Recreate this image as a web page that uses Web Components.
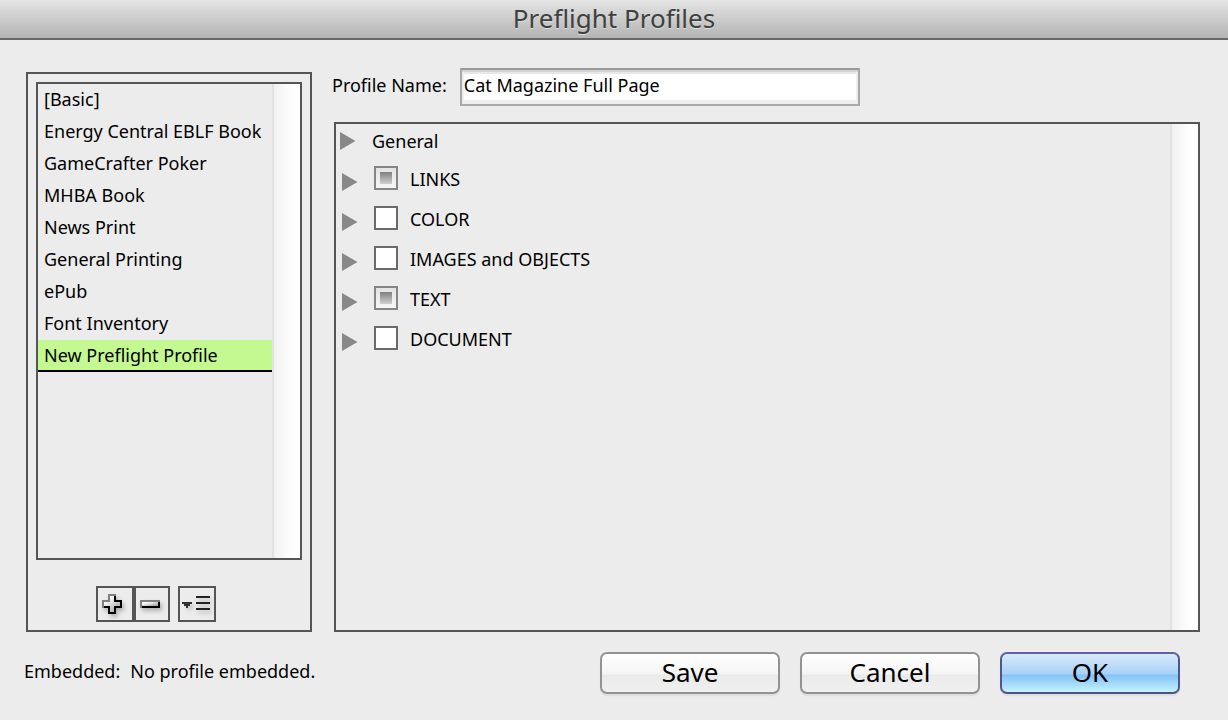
<!DOCTYPE html>
<html lang="en">
<head>
<meta charset="utf-8">
<meta name="viewport" content="width=device-width, initial-scale=1">
<title>Preflight Profiles</title>
<style>
  html, body { margin: 0; min-height: 100%; }
  body {
    --line: #555;
    --face: #ececec;
    background: var(--face);
    color: #000;
    font: 18px/24px "Noto Sans", sans-serif;
  }
</style>
</head>
<body>
<preflight-window heading="Preflight Profiles">
  <profile-list slot="sidebar">
    <profile-item>[Basic]</profile-item>
    <profile-item>Energy Central EBLF Book</profile-item>
    <profile-item>GameCrafter Poker</profile-item>
    <profile-item>MHBA Book</profile-item>
    <profile-item>News Print</profile-item>
    <profile-item>General Printing</profile-item>
    <profile-item>ePub</profile-item>
    <profile-item>Font Inventory</profile-item>
    <profile-item selected>New Preflight Profile</profile-item>
  </profile-list>
  <name-field label="Profile Name:" value="Cat Magazine Full Page"></name-field>
  <rule-panel>
    <rule-row plain>General</rule-row>
    <rule-row state="mixed">LINKS</rule-row>
    <rule-row>COLOR</rule-row>
    <rule-row>IMAGES and OBJECTS</rule-row>
    <rule-row state="mixed">TEXT</rule-row>
    <rule-row>DOCUMENT</rule-row>
  </rule-panel>
  <embed-status slot="status" label="Embedded:">No profile embedded.</embed-status>
  <push-button slot="actions">Save</push-button>
  <push-button slot="actions">Cancel</push-button>
  <push-button slot="actions" primary>OK</push-button>
</preflight-window>

<script>
class BaseElement extends HTMLElement {
  constructor() {
    super();
    this.attachShadow({ mode: 'open' }).innerHTML = this.view();
  }
  attr(name) { return this.getAttribute(name) || ''; }
}

customElements.define('preflight-window', class extends BaseElement {
  view() {
    return `
    <style>
      :host { display: flex; flex-direction: column; min-height: 100vh; }
      header {
        box-sizing: border-box; height: 40px; border-bottom: 2px solid #686868;
        background: linear-gradient(#e4e4e4, #b4b4b4);
        text-align: center;
      }
      h1 { margin: 0; font-size: 26px; line-height: 36px; font-weight: 400; color: #404040; text-shadow: 0 1px 0 #ddd; }
      main { flex: 1; display: flex; gap: 22px; padding: 28px 28px 0 26px; }
      .sidebar { display: flex; flex: none; padding-top: 4px; }
      .content { flex: 1; min-width: 0; display: flex; flex-direction: column; gap: 16px; }
      footer { display: flex; align-items: center; justify-content: space-between; padding: 20px 48px 26px 24px; }
      .actions { display: flex; gap: 20px; }
    </style>
    <header><h1>${this.attr('heading')}</h1></header>
    <main>
      <div class="sidebar"><slot name="sidebar"></slot></div>
      <div class="content"><slot></slot></div>
    </main>
    <footer>
      <slot name="status"></slot>
      <div class="actions"><slot name="actions"></slot></div>
    </footer>`;
  }
});

customElements.define('profile-list', class extends BaseElement {
  view() {
    return `
    <style>
      :host { display: flex; flex-direction: column; gap: 26px; box-sizing: border-box; width: 286px; padding: 8px; border: 2px solid var(--line); }
      .box { flex: 1; display: flex; border: 2px solid var(--line); }
      .items { flex: 1; min-width: 0; }
      scroll-track { flex: none; }
      .tools { display: flex; justify-content: center; padding-right: 26px; }
      tool-button + tool-button:last-child { margin-left: 8px; }
    </style>
    <div class="box">
      <div class="items" role="listbox" aria-label="Profiles"><slot></slot></div>
      <scroll-track></scroll-track>
    </div>
    <div class="tools">
      <tool-button kind="add"></tool-button>
      <tool-button kind="remove"></tool-button>
      <tool-button kind="menu"></tool-button>
    </div>`;
  }
});

customElements.define('profile-item', class extends BaseElement {
  view() {
    return `
    <style>
      :host { display: block; box-sizing: border-box; height: 32px; padding-left: 6px; line-height: 30px; white-space: nowrap; border-bottom: 2px solid transparent; }
      :host([selected]) { background: #c3f990; border-bottom-color: #000; }
    </style><slot></slot>`;
  }
  connectedCallback() {
    this.setAttribute('role', 'option');
    this.setAttribute('aria-selected', this.hasAttribute('selected'));
  }
});

customElements.define('scroll-track', class extends BaseElement {
  view() {
    return `
    <style>
      :host { display: block; box-sizing: border-box; width: 28px; border-left: 2px solid #e2e2e2; background: linear-gradient(90deg, #f1f1f1, #fdfdfd 60%, #fff); }
    </style>`;
  }
});

customElements.define('tool-button', class extends BaseElement {
  view() {
    const art = {
      add: ['Add profile', `<path class="s" d="M10 6h8v6h6v8h-6v6h-8v-6h-6v-8h6z"/><path d="M10 6h8v6h6v8h-6v6h-8v-6h-6v-8h6z" fill="#000"/><path d="M10 6h8v2h-6v6h-6v6h-2v-8h6z" fill="#808080"/><path d="M12 8h4v6h6v4h-6v6h-4v-6h-6v-4h6z" fill="url(#g)"/>`],
      remove: ['Remove profile', `<path class="s" d="M4 12h20v8h-20z"/><path d="M4 12h20v8h-20z" fill="#000"/><path d="M4 12h20v2h-18v6h-2z" fill="#808080"/><path d="M6 14h16v4h-16z" fill="url(#g)"/>`],
      menu: ['Profile options', `<path class="s" d="M3 14h9l-4 5zM16 8h14v2h-14zM16 14h14v2h-14zM16 20h14v2h-14z"/><path d="M2 14h10v2h-2v2h-2v2h-2v-2h-2v-2h-2z" fill="#333"/><path d="M16 8h14v2h-14zM16 14h14v2h-14zM16 20h14v2h-14z" fill="#222"/>`]
    }[this.attr('kind')];
    return `
    <style>
      :host { display: block; }
      button { display: block; box-sizing: border-box; width: 38px; height: 36px; margin: 0; padding: 0; border: 2px solid var(--line); background: var(--face); overflow: hidden; }
      :host([kind="remove"]) button { width: 36px; }
      svg { display: block; width: 34px; height: 32px; }
      .s { fill: #777; opacity: .5; filter: blur(2px); transform: translate(2px, 3px); }
    </style>
    <button type="button" aria-label="${art[0]}">
      <svg viewBox="0 0 34 32" aria-hidden="true">
        <defs><linearGradient id="g" x1="0" y1="0" x2="1" y2="1"><stop offset=".2" stop-color="#fff"/><stop offset="1" stop-color="#999"/></linearGradient></defs>
        ${art[1]}
      </svg>
    </button>`;
  }
});

customElements.define('name-field', class extends BaseElement {
  view() {
    return `
    <style>
      :host { display: flex; align-items: center; gap: 13px; margin-left: -2px; }
      label { line-height: 34px; white-space: nowrap; padding-bottom: 4px; }
      input {
        box-sizing: border-box; flex: 0 1 400px; min-width: 0; height: 38px; margin: 0; padding: 0 2px 4px;
        border: 2px solid #a9a9a9; border-top-color: #999; border-radius: 0; outline: 0;
        background: #fff; color: inherit; font: inherit;
        box-shadow: inset 0 2px #d5d5d5, inset 2px 0 #eee, inset -2px 0 #eee, inset 0 4px #e8e8e8, inset 0 -4px #eee;
      }
    </style>
    <label for="name">${this.attr('label')}</label>
    <input id="name" type="text" value="${this.attr('value')}">`;
  }
});

customElements.define('rule-panel', class extends BaseElement {
  view() {
    return `
    <style>
      :host { flex: 1; display: flex; border: 2px solid var(--line); }
      .rows { flex: 1; min-width: 0; }
    </style>
    <div class="rows"><slot></slot></div>
    <scroll-track></scroll-track>`;
  }
});

customElements.define('rule-row', class extends BaseElement {
  view() {
    const plain = this.hasAttribute('plain');
    return `
    <style>
      :host { display: flex; align-items: center; height: 40px; padding-left: 6px; }
      :host([plain]) { height: 34px; padding-left: 4px; }
      .twist { display: block; flex: none; width: 16px; margin: 0 16px 0 0; padding: 8px 0 0; border: 0; background: none; }
      :host([plain]) .twist { padding: 0; }
      .twist svg { display: block; }
      label { padding-top: 2px; }
      input {
        appearance: none; box-sizing: border-box; flex: none; width: 24px; height: 24px; margin: 0 12px 0 0;
        border: 2px solid #6a6a6a; border-radius: 0; background: #fff;
      }
      input:indeterminate {
        border-color: #858585; padding: 4px;
        background: linear-gradient(#808080, #d0d0d0) content-box, linear-gradient(#e4e4e4, #f6f6f6);
      }
    </style>
    <button class="twist" type="button" aria-label="Expand" aria-expanded="false">
      <svg width="16" height="18" viewBox="0 0 16 18" aria-hidden="true"><path d="M0 0L15.500 9L0 18z" fill="#888"/></svg>
    </button>
    ${plain ? '<span><slot></slot></span>' : '<input type="checkbox" id="on"><label for="on"><slot></slot></label>'}`;
  }
  connectedCallback() {
    const box = this.shadowRoot.querySelector('input');
    if (box) box.indeterminate = this.attr('state') === 'mixed';
  }
});

customElements.define('embed-status', class extends BaseElement {
  view() {
    return `
    <style>:host { display: flex; gap: 10px; padding-bottom: 4px; white-space: nowrap; }</style>
    <span>${this.attr('label')}</span><span><slot></slot></span>`;
  }
});

customElements.define('push-button', class extends BaseElement {
  view() {
    return `
    <style>
      :host { display: block; }
      button {
        display: block; box-sizing: border-box; width: 180px; height: 42px; margin: 0; padding: 0 0 2px;
        border: 2px solid #939393; border-radius: 7px; color: #000;
        font: inherit; font-size: 26px; line-height: 36px;
        background: linear-gradient(#fff, #f5f5f5 52%, #eaeaea 56%, #f0f0f0);
        box-shadow: 0 2px 1px #dedede;
      }
      :host([primary]) button {
        border-color: #5a62a8 #50568c #4f5280;
        background: linear-gradient(#d8e9fb, #a8d2f8 52%, #85c2f6 56%, #c4f2ff);
      }
    </style>
    <button type="button"><slot></slot></button>`;
  }
});
</script>
</body>
</html>
